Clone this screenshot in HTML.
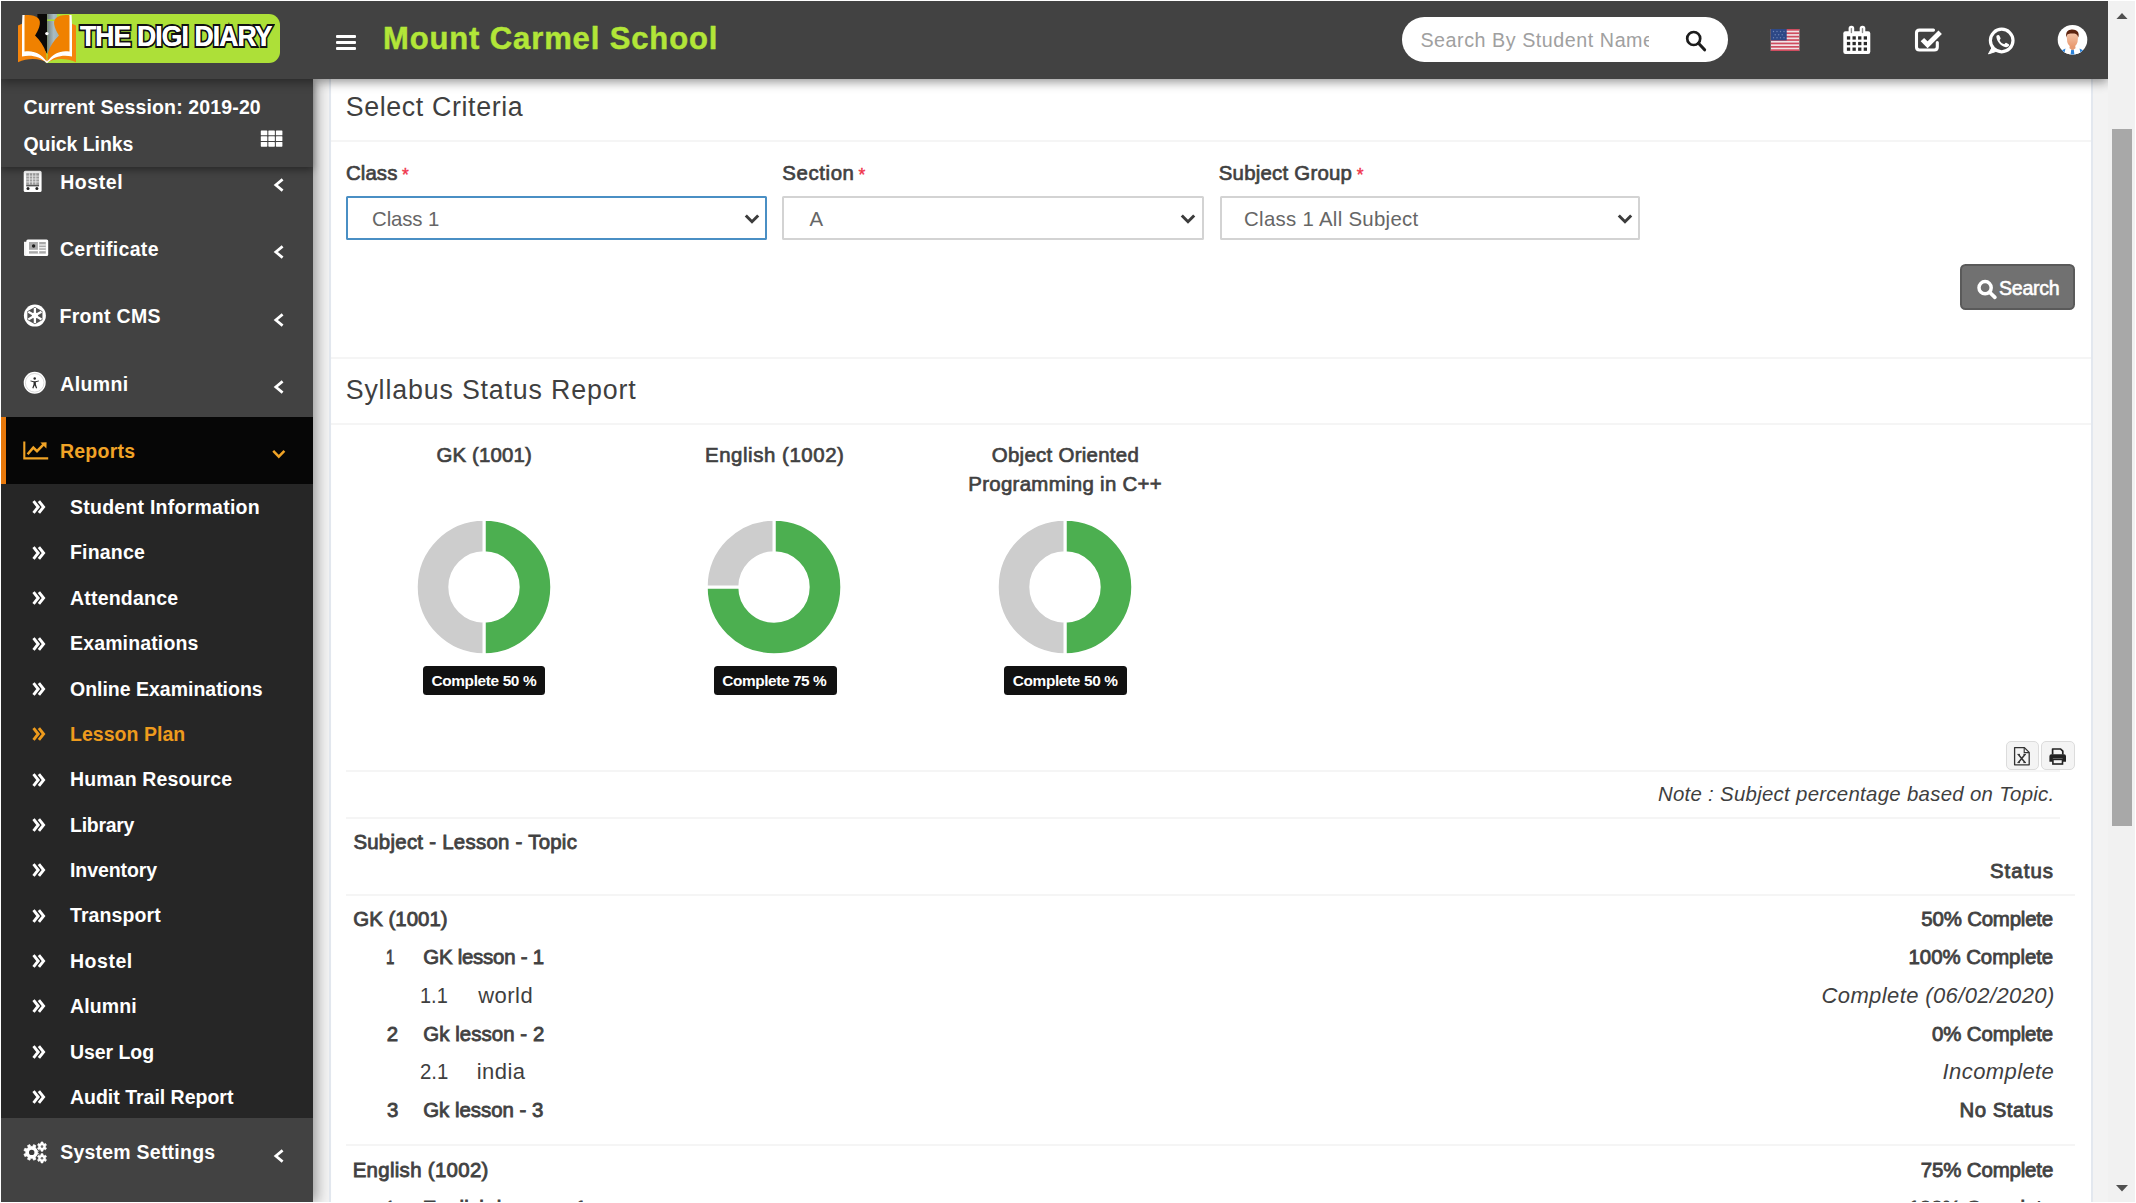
<!DOCTYPE html>
<html lang="en">
<head>
<meta charset="utf-8">
<title>Syllabus Status Report</title>
<style>
*{box-sizing:border-box;margin:0;padding:0}
html,body{width:2136px;height:1203px;overflow:hidden;background:#fff}
body{font-family:"Liberation Sans",sans-serif;color:#444;position:relative}
.abs{position:absolute}
.t{position:absolute;white-space:nowrap;line-height:1}
#app{position:absolute;left:1px;top:1px;width:2134px;height:1201px;background:#f3f3f3;overflow:hidden}
/* header */
#hdr{position:absolute;left:0;top:0;width:2107px;height:78px;background:#424242;z-index:30;box-shadow:0 3px 10px rgba(0,0,0,.42)}
/* scrollbar */
#sb{position:absolute;left:2107px;top:0;width:27px;height:1201px;background:#f1f1f1;z-index:40}
#sb .thumb{position:absolute;left:4px;top:128px;width:20px;height:697px;background:#a8a8a8}
/* sidebar */
#side{position:absolute;left:0;top:78px;width:312px;height:1123px;background:#424242;z-index:20;box-shadow:4px 0 12px rgba(0,0,0,.36)}
#side .w{color:#fff;font-weight:bold}
/* content box */
#box{position:absolute;left:328px;top:60px;width:1764px;height:1160px;background:#fff;border-left:2px solid #e3e8ef;border-right:2px solid #e3e8ef;z-index:5}
.hr{position:absolute;height:2px;background:#f2f2f2}
</style>
</head>
<body>
<div id="app">

<!-- ============ CONTENT BOX ============ -->
<div id="box">
<div class="t" style="top:32.81px;font-size:26.8px;color:#3f3f3f;left:14.69px;letter-spacing:0.624px;">Select Criteria</div>
<div class="abs" style="left:0.00px;top:78.80px;width:1760.00px;height:2.00px;background:#f5f5f5;"></div>
<div class="t" style="top:102.13px;font-size:20.4px;color:#3f3f3f;left:14.88px;letter-spacing:0.134px;-webkit-text-stroke:.7px #444;">Class</div>
<div class="t" style="top:106.39px;font-size:17.5px;color:#f0344b;left:71.04px;-webkit-text-stroke:.4px #f0344b;">*</div>
<div class="t" style="top:102.13px;font-size:20.4px;color:#3f3f3f;left:451.28px;letter-spacing:0.61px;-webkit-text-stroke:.7px #444;">Section</div>
<div class="t" style="top:106.39px;font-size:17.5px;color:#f0344b;left:527.54px;-webkit-text-stroke:.4px #f0344b;">*</div>
<div class="t" style="top:102.13px;font-size:20.4px;color:#3f3f3f;left:887.78px;letter-spacing:0.236px;-webkit-text-stroke:.7px #444;">Subject Group</div>
<div class="t" style="top:106.39px;font-size:17.5px;color:#f0344b;left:1025.74px;-webkit-text-stroke:.4px #f0344b;">*</div>
<div class="abs" style="left:15.20px;top:135.20px;width:420.50px;height:43.90px;background:#fff;border:2px solid #4a8fc4;border-radius:1.5px;"></div>
<div class="t" style="top:147.83px;font-size:20.4px;color:#666;left:41.08px;letter-spacing:-0.132px;">Class 1</div>
<svg class="abs" style="left:411.00px;top:150.10px;" width="20" height="16" viewBox="742.0 211.1 20 16"><path d="M745.8 215.6 L752.0 221.79999999999998 L758.2 215.6" fill="none" stroke="#3c3c3c" stroke-width="3"/></svg>
<div class="abs" style="left:451.40px;top:135.20px;width:421.30px;height:43.90px;background:#fff;border:2px solid #d3d3d3;border-radius:1.5px;"></div>
<div class="t" style="top:147.83px;font-size:20.4px;color:#666;left:478.60px;">A</div>
<svg class="abs" style="left:847.20px;top:150.10px;" width="20" height="16" viewBox="1178.2 211.1 20 16"><path d="M1182.0 215.6 L1188.2 221.79999999999998 L1194.4 215.6" fill="none" stroke="#3c3c3c" stroke-width="3"/></svg>
<div class="abs" style="left:888.50px;top:135.20px;width:420.10px;height:43.90px;background:#fff;border:2px solid #d3d3d3;border-radius:1.5px;"></div>
<div class="t" style="top:147.83px;font-size:20.4px;color:#666;left:913.08px;letter-spacing:0.292px;">Class 1 All Subject</div>
<svg class="abs" style="left:1284.30px;top:150.10px;" width="20" height="16" viewBox="1615.3 211.1 20 16"><path d="M1619.1 215.6 L1625.3 221.79999999999998 L1631.5 215.6" fill="none" stroke="#3c3c3c" stroke-width="3"/></svg>
<div class="abs" style="left:1629.20px;top:202.90px;width:115.00px;height:46.40px;background:#717171;border:2px solid #5a5a5a;border-radius:5.5px;"></div>
<svg class="abs" style="left:1644.00px;top:216.00px;" width="24" height="24" viewBox="1975 277 24 24"><circle cx="1985.1" cy="287.7" r="6.1" fill="none" stroke="#fff" stroke-width="3.5"/><path d="M1989.9 292.5 L1994.9 297.3" stroke="#fff" stroke-width="3.7" stroke-linecap="round"/></svg>
<div class="t" style="top:217.81px;font-size:19.6px;color:#fff;left:1668.02px;letter-spacing:-0.275px;-webkit-text-stroke:.55px #fff;">Search</div>
<div class="abs" style="left:0.00px;top:296.00px;width:1760.00px;height:2.00px;background:#f5f5f5;"></div>
<div class="t" style="top:315.91px;font-size:26.8px;color:#3f3f3f;left:14.69px;letter-spacing:0.829px;">Syllabus Status Report</div>
<div class="abs" style="left:0.00px;top:362.00px;width:1760.00px;height:2.00px;background:#f5f5f5;"></div>
<div class="t" style="top:383.73px;font-size:20.4px;color:#3f3f3f;left:105.38px;letter-spacing:0.181px;-webkit-text-stroke:.7px #444;">GK (1001)</div>
<div class="t" style="top:383.73px;font-size:20.4px;color:#3f3f3f;left:373.97px;letter-spacing:0.571px;-webkit-text-stroke:.7px #444;">English (1002)</div>
<div class="t" style="top:383.73px;font-size:20.4px;color:#3f3f3f;left:660.78px;letter-spacing:0.303px;-webkit-text-stroke:.7px #444;">Object Oriented</div>
<div class="t" style="top:413.33px;font-size:20.4px;color:#3f3f3f;left:637.27px;letter-spacing:0.312px;-webkit-text-stroke:.7px #444;">Programming in C++</div>
<svg class="abs" style="left:80.80px;top:454.30px;" width="144" height="144" viewBox="411.8 515.3 144 144"><path d="M483.80 519.50 A67.8 67.8 0 0 1 483.80 655.10 L483.80 621.50 A34.2 34.2 0 0 0 483.80 553.10 Z" fill="#4caf50" stroke="#fff" stroke-width="3" stroke-linejoin="miter"/><path d="M483.80 655.10 A67.8 67.8 0 0 1 483.80 519.50 L483.80 553.10 A34.2 34.2 0 0 0 483.80 621.50 Z" fill="#cdcdcd" stroke="#fff" stroke-width="3" stroke-linejoin="miter"/></svg>
<svg class="abs" style="left:371.20px;top:454.30px;" width="144" height="144" viewBox="702.2 515.3 144 144"><path d="M774.20 519.50 A67.8 67.8 0 1 1 706.40 587.30 L740.00 587.30 A34.2 34.2 0 1 0 774.20 553.10 Z" fill="#4caf50" stroke="#fff" stroke-width="3" stroke-linejoin="miter"/><path d="M706.40 587.30 A67.8 67.8 0 0 1 774.20 519.50 L774.20 553.10 A34.2 34.2 0 0 0 740.00 587.30 Z" fill="#cdcdcd" stroke="#fff" stroke-width="3" stroke-linejoin="miter"/></svg>
<svg class="abs" style="left:661.70px;top:454.30px;" width="144" height="144" viewBox="992.7 515.3 144 144"><path d="M1064.70 519.50 A67.8 67.8 0 0 1 1064.70 655.10 L1064.70 621.50 A34.2 34.2 0 0 0 1064.70 553.10 Z" fill="#4caf50" stroke="#fff" stroke-width="3" stroke-linejoin="miter"/><path d="M1064.70 655.10 A67.8 67.8 0 0 1 1064.70 519.50 L1064.70 553.10 A34.2 34.2 0 0 0 1064.70 621.50 Z" fill="#cdcdcd" stroke="#fff" stroke-width="3" stroke-linejoin="miter"/></svg>
<div class="abs" style="left:91.90px;top:604.80px;width:121.70px;height:29.10px;background:#111;border-radius:3.5px;"></div>
<div class="t" style="top:611.96px;font-size:15.4px;color:#fff;left:100.48px;font-weight:bold;letter-spacing:-0.356px;">Complete 50 %</div>
<div class="abs" style="left:382.90px;top:604.80px;width:122.70px;height:29.10px;background:#111;border-radius:3.5px;"></div>
<div class="t" style="top:611.96px;font-size:15.4px;color:#fff;left:391.28px;font-weight:bold;letter-spacing:-0.414px;">Complete 75 %</div>
<div class="abs" style="left:673.20px;top:604.80px;width:123.00px;height:29.10px;background:#111;border-radius:3.5px;"></div>
<div class="t" style="top:611.96px;font-size:15.4px;color:#fff;left:681.78px;font-weight:bold;letter-spacing:-0.356px;">Complete 50 %</div>
<div class="abs" style="left:1674.60px;top:679.80px;width:33.00px;height:29.20px;background:#f4f4f4;border:1.5px solid #dcdcdc;border-radius:5px;"></div>
<div class="abs" style="left:1709.60px;top:679.80px;width:34.60px;height:29.20px;background:#f4f4f4;border:1.5px solid #dcdcdc;border-radius:5px;"></div>
<svg class="abs" style="left:1681.00px;top:684.00px;" width="20" height="23" viewBox="2012 745 20 23"><path d="M2014.6 747.6 H2024.4 L2029.2 752.4 V764.8 H2014.6 Z" fill="none" stroke="#333" stroke-width="1.3" stroke-linejoin="round"/><path d="M2024.2 747.8 V752.6 H2029" fill="none" stroke="#333" stroke-width="1.1"/><path d="M2018.4 754.6 L2025 762.4 M2025 754.6 L2018.4 762.4" stroke="#333" stroke-width="1.5"/><path d="M2017.4 754.4 H2020 M2023.4 754.4 H2026 M2017.4 762.6 H2020 M2023.4 762.6 H2026" stroke="#333" stroke-width="1"/></svg>
<svg class="abs" style="left:1716.00px;top:685.00px;" width="22" height="21" viewBox="2047 746 22 21"><path d="M2052.6 754.5 V749 H2060.6 L2062.8 751.2 V754.5" fill="#f4f4f4" stroke="#222" stroke-width="1.7" stroke-linejoin="round"/><path d="M2049.4 761.8 V756.2 Q2049.4 754.2 2051.4 754.2 H2064 Q2066 754.2 2066 756.2 V761.8 H2062.6 V758.6 H2052.8 V761.8 Z" fill="#222"/><rect x="2052.9" y="759.4" width="9.6" height="4.6" fill="#f4f4f4" stroke="#222" stroke-width="1.6"/></svg>
<div class="abs" style="left:15.20px;top:709.00px;width:1714.00px;height:2.00px;background:#f5f5f5;"></div>
<div class="t" style="top:723.33px;font-size:20.4px;color:#3f3f3f;right:36.45px;font-style:italic;letter-spacing:0.293px;">Note : Subject percentage based on Topic.</div>
<div class="abs" style="left:15.20px;top:755.80px;width:1714.00px;height:2.00px;background:#f5f5f5;"></div>
<div class="t" style="top:770.73px;font-size:20.4px;color:#3f3f3f;left:22.38px;letter-spacing:0.272px;-webkit-text-stroke:.85px #444;">Subject - Lesson - Topic</div>
<div class="t" style="top:800.13px;font-size:20.4px;color:#3f3f3f;right:36.93px;letter-spacing:1.06px;-webkit-text-stroke:.85px #444;">Status</div>
<div class="abs" style="left:15.20px;top:832.60px;width:1729.20px;height:2.00px;background:#f5f5f5;"></div>
<div class="t" style="top:848.13px;font-size:20.4px;color:#3f3f3f;left:22.28px;letter-spacing:0.031px;-webkit-text-stroke:.85px #444;">GK (1001)</div>
<div class="t" style="top:848.13px;font-size:20.4px;color:#3f3f3f;right:37.97px;letter-spacing:-0.172px;-webkit-text-stroke:.85px #444;">50% Complete</div>
<div class="t" style="top:886.13px;font-size:20.4px;color:#3f3f3f;left:55.27px;-webkit-text-stroke:.85px #444;transform:scaleX(.74);transform-origin:0 0;">1</div>
<div class="t" style="top:886.13px;font-size:20.4px;color:#3f3f3f;left:92.28px;letter-spacing:-0.232px;-webkit-text-stroke:.85px #444;">GK lesson - 1</div>
<div class="t" style="top:886.13px;font-size:20.4px;color:#3f3f3f;right:37.86px;letter-spacing:-0.037px;-webkit-text-stroke:.85px #444;">100% Complete</div>
<div class="t" style="top:923.58px;font-size:22px;color:#3f3f3f;left:89.20px;transform:scaleX(0.907);transform-origin:0 0;">1.1</div>
<div class="t" style="top:923.58px;font-size:22px;color:#3f3f3f;left:147.20px;letter-spacing:0.474px;">world</div>
<div class="t" style="top:923.58px;font-size:22px;color:#3f3f3f;right:36.32px;font-style:italic;letter-spacing:0.388px;">Complete (06/02/2020)</div>
<div class="t" style="top:963.03px;font-size:20.4px;color:#3f3f3f;left:55.78px;-webkit-text-stroke:.85px #444;">2</div>
<div class="t" style="top:963.03px;font-size:20.4px;color:#3f3f3f;left:92.28px;letter-spacing:0.069px;-webkit-text-stroke:.85px #444;">Gk lesson - 2</div>
<div class="t" style="top:963.03px;font-size:20.4px;color:#3f3f3f;right:37.95px;letter-spacing:-0.132px;-webkit-text-stroke:.85px #444;">0% Complete</div>
<div class="t" style="top:1000.18px;font-size:22px;color:#3f3f3f;left:88.58px;transform:scaleX(0.928);transform-origin:0 0;">2.1</div>
<div class="t" style="top:1000.18px;font-size:22px;color:#3f3f3f;left:145.77px;letter-spacing:0.425px;">india</div>
<div class="t" style="top:1000.18px;font-size:22px;color:#3f3f3f;right:36.79px;font-style:italic;letter-spacing:0.402px;">Incomplete</div>
<div class="t" style="top:1039.33px;font-size:20.4px;color:#3f3f3f;left:56.04px;-webkit-text-stroke:.85px #444;">3</div>
<div class="t" style="top:1039.33px;font-size:20.4px;color:#3f3f3f;left:92.28px;letter-spacing:-0.006px;-webkit-text-stroke:.85px #444;">Gk lesson - 3</div>
<div class="t" style="top:1039.33px;font-size:20.4px;color:#3f3f3f;right:37.52px;letter-spacing:0.492px;-webkit-text-stroke:.85px #444;">No Status</div>
<div class="abs" style="left:15.20px;top:1083.20px;width:1729.20px;height:2.00px;background:#f5f5f5;"></div>
<div class="t" style="top:1098.73px;font-size:20.4px;color:#3f3f3f;left:21.67px;letter-spacing:0.325px;-webkit-text-stroke:.85px #444;">English (1002)</div>
<div class="t" style="top:1098.73px;font-size:20.4px;color:#3f3f3f;right:37.92px;letter-spacing:-0.126px;-webkit-text-stroke:.85px #444;">75% Complete</div>
<div class="t" style="top:1136.93px;font-size:20.4px;color:#3f3f3f;left:55.27px;-webkit-text-stroke:.85px #444;transform:scaleX(.74);transform-origin:0 0;">1</div>
<div class="t" style="top:1136.93px;font-size:20.4px;color:#3f3f3f;left:91.67px;letter-spacing:0.182px;-webkit-text-stroke:.85px #444;">English lesson - 1</div>
<div class="t" style="top:1136.93px;font-size:20.4px;color:#3f3f3f;right:37.86px;letter-spacing:-0.037px;-webkit-text-stroke:.85px #444;">100% Complete</div>

</div>

<!-- ============ SIDEBAR ============ -->
<div id="side">
<svg class="abs" style="left:21.00px;top:90.00px;" width="22" height="25" viewBox="22 169 22 25"><rect x="23.7" y="170.8" width="17.9" height="21.2" rx="1.6" fill="#fff"/><rect x="26.2" y="173.2" width="12.9" height="11.6" fill="#9c9c9c"/><g stroke="#e6e6e6" stroke-width=".9"><path d="M26.2 176.1H39.1M26.2 179H39.1M26.2 181.9H39.1M29.4 173.2V184.8M32.6 173.2V184.8M35.8 173.2V184.8"/></g><rect x="26.2" y="184.8" width="12.9" height="1.6" fill="#555"/><circle cx="28" cy="188.6" r="1.5" fill="#222"/><circle cx="36.9" cy="188.6" r="1.5" fill="#222"/></svg>
<div class="t" style="top:94.09px;font-size:19.5px;color:#fff;left:59.13px;font-weight:bold;letter-spacing:0.592px;">Hostel</div>
<svg class="abs" style="left:270.60px;top:97.20px;" width="14" height="18" viewBox="271.6 176.2 14 18"><path d="M282.20000000000005 179.6 L275.40000000000003 185.2 L282.20000000000005 190.79999999999998" fill="none" stroke="#fff" stroke-width="2.7" stroke-linejoin="miter"/></svg>
<div class="abs" style="left:0.00px;top:0.00px;width:312.00px;height:87.50px;background:#424242;box-shadow:0 3px 7px rgba(0,0,0,.38);"></div>
<div class="t" style="top:18.89px;font-size:19.5px;color:#fff;left:22.52px;font-weight:bold;letter-spacing:0.135px;">Current Session: 2019-20</div>
<div class="t" style="top:56.19px;font-size:19.5px;color:#fff;left:22.52px;font-weight:bold;letter-spacing:-0.07px;">Quick Links</div>
<svg class="abs" style="left:259.00px;top:50.00px;" width="24" height="19" viewBox="260 129 24 19"><rect x="260.80" y="130.50" width="6.5" height="4.8" rx=".6" fill="#fff"/><rect x="268.35" y="130.50" width="6.5" height="4.8" rx=".6" fill="#fff"/><rect x="275.90" y="130.50" width="6.5" height="4.8" rx=".6" fill="#fff"/><rect x="260.80" y="136.20" width="6.5" height="4.8" rx=".6" fill="#fff"/><rect x="268.35" y="136.20" width="6.5" height="4.8" rx=".6" fill="#fff"/><rect x="275.90" y="136.20" width="6.5" height="4.8" rx=".6" fill="#fff"/><rect x="260.80" y="141.90" width="6.5" height="4.8" rx=".6" fill="#fff"/><rect x="268.35" y="141.90" width="6.5" height="4.8" rx=".6" fill="#fff"/><rect x="275.90" y="141.90" width="6.5" height="4.8" rx=".6" fill="#fff"/></svg>
<svg class="abs" style="left:22.00px;top:159.00px;" width="27" height="20" viewBox="23 238 27 20"><path d="M24 241.8 H27 V256 H25.2 Q24 256 24 254.8 Z" fill="#f4f4f4"/><rect x="26.3" y="239.4" width="21.9" height="16.6" rx="1.6" fill="#fff"/><rect x="29" y="242" width="16.8" height="11.6" fill="#a9a9a9"/><g fill="#fff"><rect x="37.9" y="242" width="1.3" height="11.6"/><rect x="29" y="249.8" width="16.8" height="1.4"/><rect x="39.2" y="244.4" width="6.6" height="1.1"/><rect x="39.2" y="247.2" width="6.6" height="1.1"/></g><circle cx="33.6" cy="246" r="1.7" fill="#1c1c1c"/></svg>
<div class="t" style="top:160.99px;font-size:19.5px;color:#fff;left:58.92px;font-weight:bold;letter-spacing:0.326px;">Certificate</div>
<svg class="abs" style="left:270.60px;top:164.40px;" width="14" height="18" viewBox="271.6 243.4 14 18"><path d="M282.20000000000005 246.8 L275.40000000000003 252.4 L282.20000000000005 258.0" fill="none" stroke="#fff" stroke-width="2.7" stroke-linejoin="miter"/></svg>
<svg class="abs" style="left:21.00px;top:224.00px;" width="26" height="26" viewBox="22 303 26 26"><circle cx="34.9" cy="315.6" r="11" fill="#fff"/><polygon points="34.90,306.90 42.43,311.25 42.43,319.95 34.90,324.30 27.37,319.95 27.37,311.25" fill="#505050"/><path d="M34.9 315.6 L41.48 319.40" stroke="#fff" stroke-width="2.3"/><path d="M34.9 315.6 L34.90 323.20" stroke="#fff" stroke-width="2.3"/><path d="M34.9 315.6 L28.32 319.40" stroke="#fff" stroke-width="2.3"/><path d="M34.9 315.6 L28.32 311.80" stroke="#fff" stroke-width="2.3"/><path d="M34.9 315.6 L34.90 308.00" stroke="#fff" stroke-width="2.3"/><path d="M34.9 315.6 L41.48 311.80" stroke="#fff" stroke-width="2.3"/><circle cx="34.9" cy="315.6" r="3" fill="#fff"/></svg>
<div class="t" style="top:228.49px;font-size:19.5px;color:#fff;left:58.43px;font-weight:bold;letter-spacing:0.328px;">Front CMS</div>
<svg class="abs" style="left:270.60px;top:231.60px;" width="14" height="18" viewBox="271.6 310.6 14 18"><path d="M282.20000000000005 314.0 L275.40000000000003 319.6 L282.20000000000005 325.20000000000005" fill="none" stroke="#fff" stroke-width="2.7" stroke-linejoin="miter"/></svg>
<svg class="abs" style="left:21.00px;top:291.00px;" width="26" height="26" viewBox="22 370 26 26"><circle cx="34.7" cy="382.8" r="11" fill="#fff"/><circle cx="34.7" cy="382.8" r="9.3" fill="none" stroke="#cfcfcf" stroke-width=".8"/><circle cx="34.7" cy="378.6" r="1.25" fill="#2a2a2a"/><path d="M30.57 380.43 L33.84 381.21 L35.56 381.21 L38.83 380.43 L39.00 381.29 L35.82 382.33 L35.90 384.39 L37.11 388.09 L36.08 388.43 L34.70 385.16 L33.32 388.43 L32.29 388.09 L33.50 384.39 L33.58 382.33 L30.40 381.29 Z" fill="#2a2a2a"/></svg>
<div class="t" style="top:295.59px;font-size:19.5px;color:#fff;left:59.21px;font-weight:bold;letter-spacing:0.359px;">Alumni</div>
<svg class="abs" style="left:270.60px;top:298.80px;" width="14" height="18" viewBox="271.6 377.8 14 18"><path d="M282.20000000000005 381.2 L275.40000000000003 386.8 L282.20000000000005 392.40000000000003" fill="none" stroke="#fff" stroke-width="2.7" stroke-linejoin="miter"/></svg>
<div class="abs" style="left:0.00px;top:337.60px;width:312.00px;height:67.80px;background:#060606;"></div>
<div class="abs" style="left:0.00px;top:337.60px;width:4.60px;height:67.80px;background:#e8790c;"></div>
<svg class="abs" style="left:21.00px;top:361.00px;" width="28" height="22" viewBox="22 440 28 22"><path d="M24.3 441.6 V458.4 H48.2" fill="none" stroke="#f0a326" stroke-width="2.1"/><path d="M27.6 454.2 L33.3 447.6 L37 451.2 L43.4 444.6" fill="none" stroke="#f0a326" stroke-width="2.5" stroke-linejoin="miter"/><path d="M40.4 442.5 L46.6 442.3 L46.4 448.5 Z" fill="#f0a326"/></svg>
<div class="t" style="top:362.99px;font-size:19.5px;color:#f0a326;left:58.93px;font-weight:bold;letter-spacing:0.24px;">Reports</div>
<svg class="abs" style="left:269.00px;top:367.00px;" width="18" height="16" viewBox="270 446 18 16"><path d="M273.2 450.8 L278.8 456.6 L284.40000000000003 450.8" fill="none" stroke="#f0a326" stroke-width="2.5"/></svg>
<div class="abs" style="left:0.00px;top:405.40px;width:312.00px;height:633.80px;background:#262626;"></div>
<svg class="abs" style="left:29.00px;top:419.40px;" width="20" height="18" viewBox="30 498.4 20 18"><path d="M33.5 501.5 L38.2 507.4 L33.5 513.3" fill="none" stroke="#fff" stroke-width="2.9"/><path d="M38.9 501.5 L43.6 507.4 L38.9 513.3" fill="none" stroke="#fff" stroke-width="2.9"/></svg>
<div class="t" style="top:419.09px;font-size:19.5px;color:#fff;left:69.00px;font-weight:bold;letter-spacing:0.243px;">Student Information</div>
<svg class="abs" style="left:29.00px;top:464.77px;" width="20" height="18" viewBox="30 543.77 20 18"><path d="M33.5 546.87 L38.2 552.77 L33.5 558.67" fill="none" stroke="#fff" stroke-width="2.9"/><path d="M38.9 546.87 L43.6 552.77 L38.9 558.67" fill="none" stroke="#fff" stroke-width="2.9"/></svg>
<div class="t" style="top:464.46px;font-size:19.5px;color:#fff;left:69.00px;font-weight:bold;letter-spacing:0.195px;">Finance</div>
<svg class="abs" style="left:29.00px;top:510.14px;" width="20" height="18" viewBox="30 589.14 20 18"><path d="M33.5 592.24 L38.2 598.14 L33.5 604.04" fill="none" stroke="#fff" stroke-width="2.9"/><path d="M38.9 592.24 L43.6 598.14 L38.9 604.04" fill="none" stroke="#fff" stroke-width="2.9"/></svg>
<div class="t" style="top:509.83px;font-size:19.5px;color:#fff;left:69.00px;font-weight:bold;letter-spacing:0.206px;">Attendance</div>
<svg class="abs" style="left:29.00px;top:555.51px;" width="20" height="18" viewBox="30 634.51 20 18"><path d="M33.5 637.61 L38.2 643.51 L33.5 649.41" fill="none" stroke="#fff" stroke-width="2.9"/><path d="M38.9 637.61 L43.6 643.51 L38.9 649.41" fill="none" stroke="#fff" stroke-width="2.9"/></svg>
<div class="t" style="top:555.20px;font-size:19.5px;color:#fff;left:69.00px;font-weight:bold;letter-spacing:0.144px;">Examinations</div>
<svg class="abs" style="left:29.00px;top:600.88px;" width="20" height="18" viewBox="30 679.88 20 18"><path d="M33.5 682.98 L38.2 688.88 L33.5 694.78" fill="none" stroke="#fff" stroke-width="2.9"/><path d="M38.9 682.98 L43.6 688.88 L38.9 694.78" fill="none" stroke="#fff" stroke-width="2.9"/></svg>
<div class="t" style="top:600.57px;font-size:19.5px;color:#fff;left:69.00px;font-weight:bold;letter-spacing:-0.012px;">Online Examinations</div>
<svg class="abs" style="left:29.00px;top:646.25px;" width="20" height="18" viewBox="30 725.25 20 18"><path d="M33.5 728.35 L38.2 734.25 L33.5 740.15" fill="none" stroke="#ee9b1d" stroke-width="2.9"/><path d="M38.9 728.35 L43.6 734.25 L38.9 740.15" fill="none" stroke="#ee9b1d" stroke-width="2.9"/></svg>
<div class="t" style="top:645.94px;font-size:19.5px;color:#ee9b1d;left:69.00px;font-weight:bold;letter-spacing:0.031px;">Lesson Plan</div>
<svg class="abs" style="left:29.00px;top:691.62px;" width="20" height="18" viewBox="30 770.6199999999999 20 18"><path d="M33.5 773.7199999999999 L38.2 779.6199999999999 L33.5 785.5199999999999" fill="none" stroke="#fff" stroke-width="2.9"/><path d="M38.9 773.7199999999999 L43.6 779.6199999999999 L38.9 785.5199999999999" fill="none" stroke="#fff" stroke-width="2.9"/></svg>
<div class="t" style="top:691.31px;font-size:19.5px;color:#fff;left:69.00px;font-weight:bold;letter-spacing:0.138px;">Human Resource</div>
<svg class="abs" style="left:29.00px;top:736.99px;" width="20" height="18" viewBox="30 815.99 20 18"><path d="M33.5 819.09 L38.2 824.99 L33.5 830.89" fill="none" stroke="#fff" stroke-width="2.9"/><path d="M38.9 819.09 L43.6 824.99 L38.9 830.89" fill="none" stroke="#fff" stroke-width="2.9"/></svg>
<div class="t" style="top:736.68px;font-size:19.5px;color:#fff;left:69.00px;font-weight:bold;letter-spacing:-0.276px;">Library</div>
<svg class="abs" style="left:29.00px;top:782.36px;" width="20" height="18" viewBox="30 861.3599999999999 20 18"><path d="M33.5 864.4599999999999 L38.2 870.3599999999999 L33.5 876.2599999999999" fill="none" stroke="#fff" stroke-width="2.9"/><path d="M38.9 864.4599999999999 L43.6 870.3599999999999 L38.9 876.2599999999999" fill="none" stroke="#fff" stroke-width="2.9"/></svg>
<div class="t" style="top:782.05px;font-size:19.5px;color:#fff;left:69.00px;font-weight:bold;letter-spacing:-0.075px;">Inventory</div>
<svg class="abs" style="left:29.00px;top:827.73px;" width="20" height="18" viewBox="30 906.73 20 18"><path d="M33.5 909.83 L38.2 915.73 L33.5 921.63" fill="none" stroke="#fff" stroke-width="2.9"/><path d="M38.9 909.83 L43.6 915.73 L38.9 921.63" fill="none" stroke="#fff" stroke-width="2.9"/></svg>
<div class="t" style="top:827.42px;font-size:19.5px;color:#fff;left:69.00px;font-weight:bold;letter-spacing:0.094px;">Transport</div>
<svg class="abs" style="left:29.00px;top:873.10px;" width="20" height="18" viewBox="30 952.0999999999999 20 18"><path d="M33.5 955.1999999999999 L38.2 961.0999999999999 L33.5 966.9999999999999" fill="none" stroke="#fff" stroke-width="2.9"/><path d="M38.9 955.1999999999999 L43.6 961.0999999999999 L38.9 966.9999999999999" fill="none" stroke="#fff" stroke-width="2.9"/></svg>
<div class="t" style="top:872.79px;font-size:19.5px;color:#fff;left:69.00px;font-weight:bold;letter-spacing:0.519px;">Hostel</div>
<svg class="abs" style="left:29.00px;top:918.47px;" width="20" height="18" viewBox="30 997.47 20 18"><path d="M33.5 1000.57 L38.2 1006.47 L33.5 1012.37" fill="none" stroke="#fff" stroke-width="2.9"/><path d="M38.9 1000.57 L43.6 1006.47 L38.9 1012.37" fill="none" stroke="#fff" stroke-width="2.9"/></svg>
<div class="t" style="top:918.16px;font-size:19.5px;color:#fff;left:69.00px;font-weight:bold;letter-spacing:0.142px;">Alumni</div>
<svg class="abs" style="left:29.00px;top:963.84px;" width="20" height="18" viewBox="30 1042.84 20 18"><path d="M33.5 1045.9399999999998 L38.2 1051.84 L33.5 1057.74" fill="none" stroke="#fff" stroke-width="2.9"/><path d="M38.9 1045.9399999999998 L43.6 1051.84 L38.9 1057.74" fill="none" stroke="#fff" stroke-width="2.9"/></svg>
<div class="t" style="top:963.53px;font-size:19.5px;color:#fff;left:69.00px;font-weight:bold;letter-spacing:-0.059px;">User Log</div>
<svg class="abs" style="left:29.00px;top:1009.21px;" width="20" height="18" viewBox="30 1088.21 20 18"><path d="M33.5 1091.31 L38.2 1097.21 L33.5 1103.1100000000001" fill="none" stroke="#fff" stroke-width="2.9"/><path d="M38.9 1091.31 L43.6 1097.21 L38.9 1103.1100000000001" fill="none" stroke="#fff" stroke-width="2.9"/></svg>
<div class="t" style="top:1008.90px;font-size:19.5px;color:#fff;left:69.00px;font-weight:bold;letter-spacing:-0.012px;">Audit Trail Report</div>
<svg class="abs" style="left:20.00px;top:1060.00px;" width="30" height="27" viewBox="21 1139 30 27"><polygon points="39.48,1154.27 38.52,1156.58 36.55,1155.93 35.23,1157.25 35.88,1159.22 33.57,1160.18 32.64,1158.33 30.76,1158.33 29.83,1160.18 27.52,1159.22 28.17,1157.25 26.85,1155.93 24.88,1156.58 23.92,1154.27 25.77,1153.34 25.77,1151.46 23.92,1150.53 24.88,1148.22 26.85,1148.87 28.17,1147.55 27.52,1145.58 29.83,1144.62 30.76,1146.47 32.64,1146.47 33.57,1144.62 35.88,1145.58 35.23,1147.55 36.55,1148.87 38.52,1148.22 39.48,1150.53 37.63,1151.46 37.63,1153.34" fill="#fff" stroke="#fff" stroke-width=".7" stroke-linejoin="round"/><circle cx="31.7" cy="1152.4" r="2.7" fill="#3a3a3a"/><polygon points="46.47,1148.05 45.49,1149.74 44.28,1149.13 43.05,1149.83 42.98,1151.20 41.02,1151.20 40.95,1149.83 39.72,1149.13 38.51,1149.74 37.53,1148.05 38.67,1147.31 38.67,1145.89 37.53,1145.15 38.51,1143.46 39.72,1144.07 40.95,1143.37 41.02,1142.00 42.98,1142.00 43.05,1143.37 44.28,1144.07 45.49,1143.46 46.47,1145.15 45.33,1145.89 45.33,1147.31" fill="#424242" stroke="#424242" stroke-width="2.2" stroke-linejoin="round"/><polygon points="46.47,1148.05 45.49,1149.74 44.28,1149.13 43.05,1149.83 42.98,1151.20 41.02,1151.20 40.95,1149.83 39.72,1149.13 38.51,1149.74 37.53,1148.05 38.67,1147.31 38.67,1145.89 37.53,1145.15 38.51,1143.46 39.72,1144.07 40.95,1143.37 41.02,1142.00 42.98,1142.00 43.05,1143.37 44.28,1144.07 45.49,1143.46 46.47,1145.15 45.33,1145.89 45.33,1147.31" fill="#fff" stroke="#fff" stroke-width=".7" stroke-linejoin="round"/><circle cx="42.0" cy="1146.6" r="1.3" fill="#6a6a6a"/><polygon points="46.47,1159.75 45.49,1161.44 44.28,1160.83 43.05,1161.53 42.98,1162.90 41.02,1162.90 40.95,1161.53 39.72,1160.83 38.51,1161.44 37.53,1159.75 38.67,1159.01 38.67,1157.59 37.53,1156.85 38.51,1155.16 39.72,1155.77 40.95,1155.07 41.02,1153.70 42.98,1153.70 43.05,1155.07 44.28,1155.77 45.49,1155.16 46.47,1156.85 45.33,1157.59 45.33,1159.01" fill="#424242" stroke="#424242" stroke-width="2.2" stroke-linejoin="round"/><polygon points="46.47,1159.75 45.49,1161.44 44.28,1160.83 43.05,1161.53 42.98,1162.90 41.02,1162.90 40.95,1161.53 39.72,1160.83 38.51,1161.44 37.53,1159.75 38.67,1159.01 38.67,1157.59 37.53,1156.85 38.51,1155.16 39.72,1155.77 40.95,1155.07 41.02,1153.70 42.98,1153.70 43.05,1155.07 44.28,1155.77 45.49,1155.16 46.47,1156.85 45.33,1157.59 45.33,1159.01" fill="#fff" stroke="#fff" stroke-width=".7" stroke-linejoin="round"/><circle cx="42.0" cy="1158.3" r="1.3" fill="#6a6a6a"/></svg>
<div class="t" style="top:1064.49px;font-size:19.5px;color:#fff;left:59.16px;font-weight:bold;letter-spacing:0.233px;">System Settings</div>
<svg class="abs" style="left:270.80px;top:1068.00px;" width="14" height="18" viewBox="271.8 1147 14 18"><path d="M282.40000000000003 1150.4 L275.6 1156 L282.40000000000003 1161.6" fill="none" stroke="#fff" stroke-width="2.7" stroke-linejoin="miter"/></svg>

</div>

<!-- ============ HEADER ============ -->
<div id="hdr">

  <!-- logo -->
  <div class="abs" style="left:44px;top:13px;width:235px;height:49px;background:#ade038;border-radius:2px 11px 11px 2px"></div>
  <svg class="abs" style="left:15px;top:12px" width="63" height="53" viewBox="16 13 63 53">
    <defs><linearGradient id="pn" x1="0" x2="1"><stop offset="0" stop-color="#76827f"/><stop offset=".55" stop-color="#a9bcc2"/><stop offset="1" stop-color="#9db1b6"/></linearGradient></defs>
    <!-- outer covers -->
    <path d="M18 25.6 L22.6 23.4 L22.6 56 C31 53.5 40 55.5 47 62.6 C40 58 28 57.5 18 62.2 Z" fill="#f5850d"/>
    <path d="M76 25.6 L71.4 23.4 L71.4 56 C63 53.5 54 55.5 47 62.6 C54 58 66 57.5 76 62.2 Z" fill="#f5850d"/>
    <!-- white page edges -->
    <path d="M22 24 L22.4 15 L25 15 L25 51 C33 49.5 41 52.5 47 60.5 L47 63.2 C40 56 30 54.3 22 56.6 Z" fill="#fff"/>
    <path d="M72 24 L71.6 15 L69 15 L69 51 C61 49.5 53 52.5 47 60.5 L47 63.2 C54 56 64 54.3 72 56.6 Z" fill="#fff"/>
    <!-- pen nib -->
    <path d="M37.4 14 L47.2 14 L47.2 54 L35 36 C36 32 38.5 27 37.4 22 Z" fill="#0b0908"/>
    <path d="M47.2 14 L56.9 14 L56.9 22 C55.8 27 58 32 59 36 L47.2 54 Z" fill="url(#pn)"/>
    <path d="M47.2 20.2 L56 20.2" stroke="#a8e32e" stroke-width="1.5"/>
    <!-- orange pages -->
    <path d="M24.5 15.2 C30 14.4 35 15.4 38 18 C40.2 20 40.4 23 39.2 27 C38.2 30 36.6 33 35 35.4 C40 40 44 46 46.2 53 L46.7 61.5 C41 53.5 33 50 24.5 51.6 Z" fill="#f08100"/>
    <path d="M69.5 15.2 C64 14.4 59 15.4 56 18 C53.8 20 53.6 23 54.8 27 C55.8 30 57.4 33 59 35.4 C54 40 50 46 47.8 53 L47.3 61.5 C53 53.5 61 50 69.5 51.6 Z" fill="#f08100"/>
    <circle cx="46.9" cy="33.6" r="1.7" fill="#fff"/>
  </svg>
  <div class="t" id="logotxt" style="left:79px;top:20px;font-size:30px;font-weight:bold;color:#fff;transform-origin:0 0;transform:scaleX(.885);letter-spacing:-1px;-webkit-text-stroke:4px #111;paint-order:stroke fill">THE DIGI DIARY</div>
  <div class="t" id="logotxt2" style="left:79px;top:20px;font-size:30px;font-weight:bold;color:#fff;transform-origin:0 0;transform:scaleX(.885);letter-spacing:-1px">THE DIGI DIARY</div>
  <!-- hamburger -->
  <div class="abs" style="left:335px;top:34px;width:20px;height:3px;background:#fff;border-radius:1px"></div>
  <div class="abs" style="left:335px;top:40px;width:20px;height:3px;background:#fff;border-radius:1px"></div>
  <div class="abs" style="left:335px;top:46px;width:20px;height:3px;background:#fff;border-radius:1px"></div>
  <!-- title -->
<div class="t" style="top:22.36px;font-size:31px;color:#b2e638;left:381.99px;font-weight:bold;letter-spacing:0.877px;-webkit-text-stroke:.45px #b2e638;">Mount Carmel School</div>

  <!-- search -->
<div class="abs" style="left:1400.70px;top:16.30px;width:326.00px;height:44.60px;background:#fff;border-radius:22.3px;"></div>
<div class="abs" style="left:1414px;top:16px;width:234.4px;height:45px;overflow:hidden"><div class="t" style="top:14.22px;font-size:19.7px;color:#a0a0a0;left:5.41px;letter-spacing:0.546px;">Search By Student Name</div>
</div>
<svg class="abs" style="left:1682.00px;top:27.00px;" width="26" height="26" viewBox="1683 28 26 26"><circle cx="1693.7" cy="38.5" r="6.5" fill="none" stroke="#1c1c1c" stroke-width="2.7"/><path d="M1698.5 43.3 L1704.6 49.8" stroke="#1c1c1c" stroke-width="3.1" stroke-linecap="round"/></svg>


  <!-- flag (image 1770.8..1799.3 x 29..51) -->
  <svg class="abs" style="left:1769px;top:27px" width="31" height="25" viewBox="1770 28 31 25">
    <rect x="1770.8" y="29" width="28.5" height="22" fill="#f1e2e5"/>
    <g fill="#cf4c5f">
      <rect x="1770.8" y="29" width="28.5" height="1.7"/><rect x="1770.8" y="32.4" width="28.5" height="1.7"/><rect x="1770.8" y="35.8" width="28.5" height="1.7"/><rect x="1770.8" y="39.2" width="28.5" height="1.7"/>
      <rect x="1770.8" y="42.6" width="28.5" height="1.7"/><rect x="1770.8" y="46" width="28.5" height="1.7"/><rect x="1770.8" y="49.3" width="28.5" height="1.7"/>
    </g>
    <rect x="1770.8" y="29" width="15.9" height="11.4" fill="#2d4886"/>
    <g fill="#6f84b4"><circle cx="1773.5" cy="31.5" r=".7"/><circle cx="1777" cy="31.5" r=".7"/><circle cx="1780.5" cy="31.5" r=".7"/><circle cx="1784" cy="31.5" r=".7"/><circle cx="1775.2" cy="34.7" r=".7"/><circle cx="1778.7" cy="34.7" r=".7"/><circle cx="1782.2" cy="34.7" r=".7"/><circle cx="1773.5" cy="37.8" r=".7"/><circle cx="1777" cy="37.8" r=".7"/><circle cx="1780.5" cy="37.8" r=".7"/><circle cx="1784" cy="37.8" r=".7"/></g>
  </svg>
  <!-- calendar (image 1843.3..1870.3 x 25.8..53.9) -->
  <svg class="abs" style="left:1841px;top:24px" width="32" height="32" viewBox="1842 25 32 32">
    <rect x="1843.3" y="31.2" width="27" height="22.7" rx="2.2" fill="#fff"/>
    <rect x="1848.6" y="25.8" width="5.6" height="9" rx="2.6" fill="#fff" stroke="#424242" stroke-width="0"/>
    <rect x="1859.7" y="25.8" width="5.6" height="9" rx="2.6" fill="#fff"/>
    <rect x="1850.7" y="28" width="1.4" height="5.2" rx=".7" fill="#8a8a8a"/>
    <rect x="1861.8" y="28" width="1.4" height="5.2" rx=".7" fill="#8a8a8a"/>
    <g fill="#2b2b2b">
      <rect x="1846.9" y="36.3" width="3.3" height="3.3"/><rect x="1852.5" y="36.3" width="3.3" height="3.3"/><rect x="1858.1" y="36.3" width="3.3" height="3.3"/><rect x="1863.7" y="36.3" width="3.3" height="3.3"/>
      <rect x="1846.9" y="41.9" width="3.3" height="3.3"/><rect x="1852.5" y="41.9" width="3.3" height="3.3"/><rect x="1858.1" y="41.9" width="3.3" height="3.3"/><rect x="1863.7" y="41.9" width="3.3" height="3.3"/>
      <rect x="1846.9" y="47.5" width="3.3" height="3.3"/><rect x="1852.5" y="47.5" width="3.3" height="3.3"/><rect x="1858.1" y="47.5" width="3.3" height="3.3"/><rect x="1863.7" y="47.5" width="3.3" height="3.3"/>
    </g>
  </svg>
  <!-- check-square-o (box 1915..1938.8 x 28.6..51.5) -->
  <svg class="abs" style="left:1912px;top:25px" width="34" height="30" viewBox="1913 26 34 30">
    <path d="M1933.5 30.1 L1919.5 30.1 Q1916.5 30.1 1916.5 33.1 L1916.5 47 Q1916.5 50 1919.5 50 L1934.3 50 Q1937.3 50 1937.3 47 L1937.3 42.5" fill="none" stroke="#fff" stroke-width="3.1" stroke-linecap="round"/>
    <path d="M1922.4 39.6 L1927.6 44.8 L1940.2 32.2" fill="none" stroke="#fff" stroke-width="4.8" stroke-linecap="butt" stroke-linejoin="miter"/>
  </svg>
  <!-- whatsapp (ring 1988.7..2014.6 x 27.8..53.3) -->
  <svg class="abs" style="left:1985px;top:25px" width="32" height="32" viewBox="1986 26 32 32">
    <circle cx="2001.7" cy="40.5" r="11.3" fill="none" stroke="#fff" stroke-width="3.2"/>
    <path d="M1992.0 47.6 L1988.5 53.9 L1995.6 51.6 Z" fill="#fff" stroke="#fff" stroke-width="1" stroke-linejoin="round"/>
    <path d="M1996.4 37 C1996.2 35.8 1997.2 34.9 1998.3 35 C1999 35 1999.3 35.4 1999.6 36 L2000.5 38 C2000.8 38.7 2000.3 39.2 1999.9 39.7 C1999.6 40.1 1999.6 40.4 1999.9 40.9 C2000.9 42.4 2002.1 43.4 2003.7 44.1 C2004.2 44.3 2004.5 44.2 2004.8 43.8 C2005.3 43.2 2005.7 42.6 2006.5 43 L2008.4 43.9 C2009 44.2 2009.2 44.5 2009.1 45.1 C2008.9 46.6 2007.3 47.4 2005.9 47.2 C2001.2 46.5 1997.2 42.2 1996.4 37 Z" fill="#fff"/>
  </svg>
  <!-- avatar (circle center 2072.5,39.7 r 14.8) -->
  <svg class="abs" style="left:2055px;top:22px" width="34" height="34" viewBox="2056 23 34 34">
    <defs><clipPath id="avc"><circle cx="2072.5" cy="39.7" r="14.8"/></clipPath>
    <linearGradient id="skin" x1="0" x2="0" y1="0" y2="1"><stop offset="0" stop-color="#f7cdb4"/><stop offset="1" stop-color="#e8996f"/></linearGradient></defs>
    <circle cx="2072.5" cy="39.7" r="14.8" fill="#fff"/>
    <g clip-path="url(#avc)">
      <path d="M2060 57 L2061 52 Q2063 48.5 2068 48 L2077 48 Q2082 48.5 2084 52 L2085 57 Z" fill="#fff"/>
      <path d="M2059 57 L2061.5 50.5 L2065.5 48.6 L2063.5 57 Z" fill="#2b82d9"/>
      <path d="M2086 57 L2083.5 50.5 L2079.5 48.6 L2081.5 57 Z" fill="#2b82d9"/>
      <path d="M2071.2 49.5 L2073.8 49.5 L2074.6 57 L2070.4 57 Z" fill="#2b82d9"/>
      <path d="M2070 44 L2075 44 L2075.5 48.2 L2072.5 50.3 L2069.5 48.2 Z" fill="#e69a72"/>
      <path d="M2066.6 35 C2066.6 31.5 2069 30.6 2072.4 30.6 C2075.8 30.6 2078.2 31.5 2078.2 35 L2077.6 41.5 C2077.2 44.5 2074.8 46.8 2072.4 46.8 C2070 46.8 2067.6 44.5 2067.2 41.5 Z" fill="url(#skin)"/>
      <path d="M2066.3 37.5 C2065.6 33 2067 30.2 2070.5 29.8 C2073 29 2077.2 30 2078.2 32.5 C2079 34.5 2078.6 36 2078.3 37.5 C2077.8 35.5 2076.5 33.8 2074.5 33.6 C2072 33.4 2069.2 33.2 2067.6 34.2 C2066.8 35 2066.6 36.2 2066.3 37.5 Z" fill="#5d2410"/>
    </g>
  </svg>

</div>

<!-- ============ SCROLLBAR ============ -->
<div id="sb">
  <div class="thumb"></div>
  <svg class="abs" style="left:8px;top:11.5px" width="12" height="6.5" viewBox="0 0 12 6.5"><path d="M0 6.5 L6 0 L12 6.5 Z" fill="#505050"/></svg>
  <svg class="abs" style="left:8px;top:1184px" width="12" height="6.5" viewBox="0 0 12 6.5"><path d="M0 0 L12 0 L6 6.5 Z" fill="#505050"/></svg>
</div>

</div>
</body>
</html>
